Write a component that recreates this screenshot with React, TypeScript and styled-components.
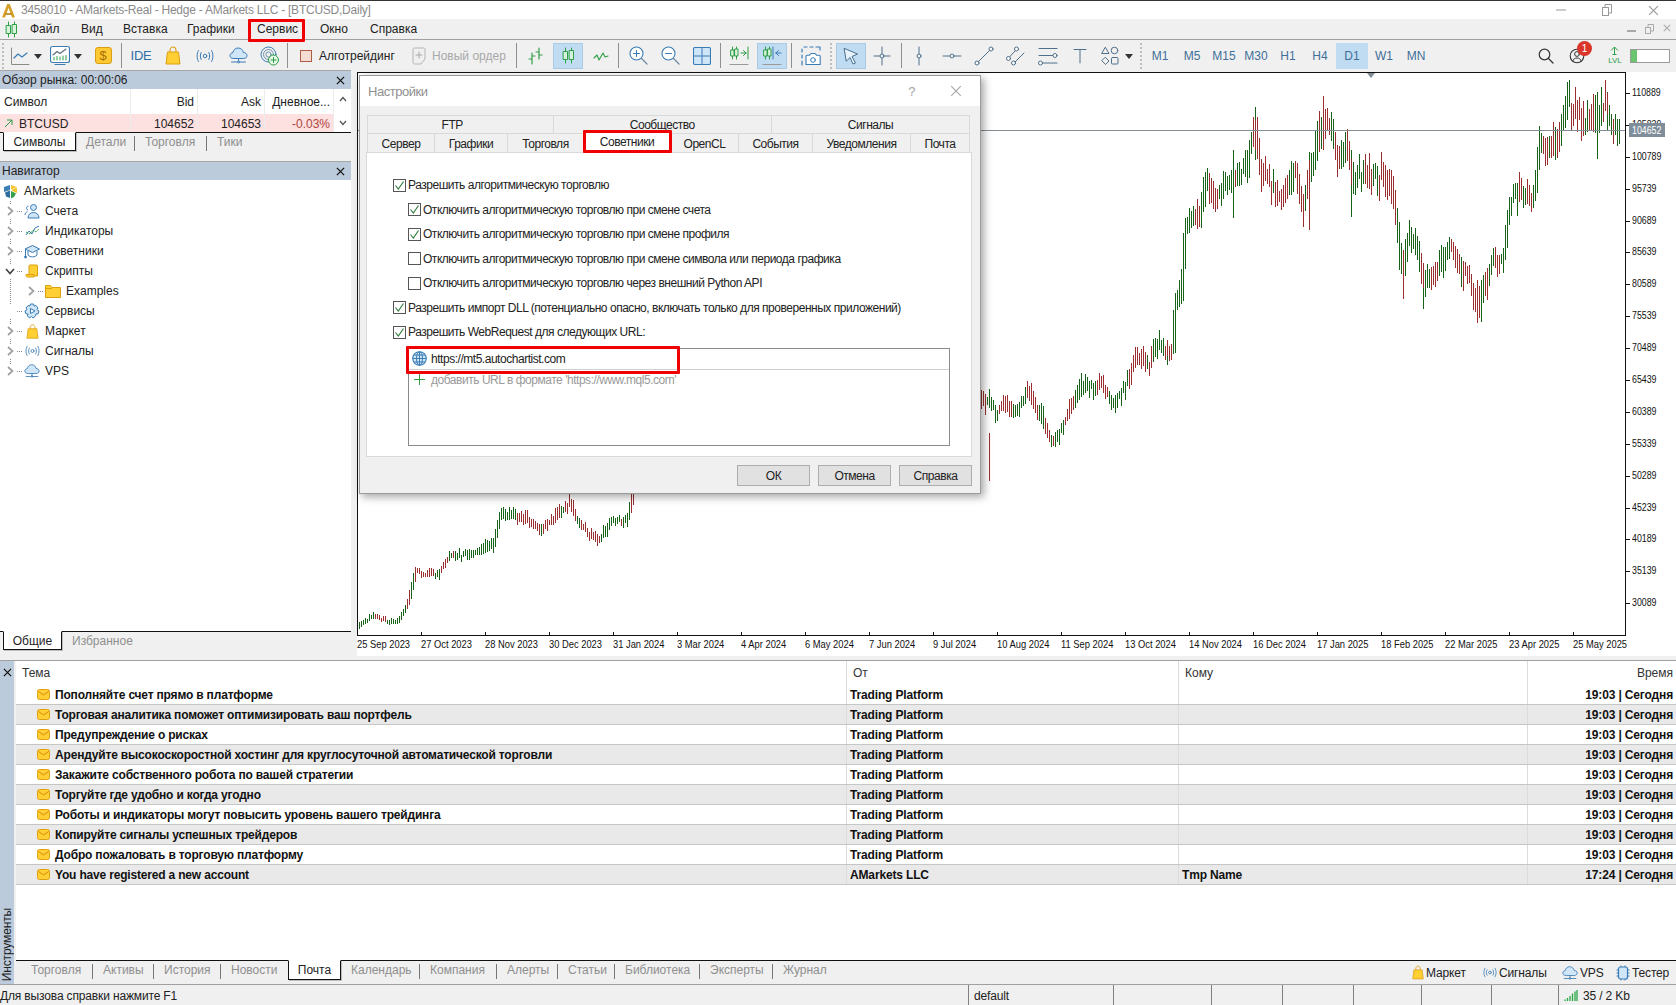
import React from 'react';
import styled, {createGlobalStyle} from 'styled-components';

const GlobalStyle = createGlobalStyle`
    html, body {
        margin: 0;
        padding: 0;
        background: #f0f0f0;
    }
    * {
        box-sizing: border-box;
    }
`

const BLUE = '#3b7cb4';
const PALE = '#cfe5f8';
const GREEN = '#2e9e47';
const GOLD = '#ffcf33';
const GOLD_DARK = '#dc9f12';

// ---------- icons ----------

const ToolSvg = ({w = 20, h = 20, children}: { w?: number, h?: number, children: React.ReactNode }) => (
    <svg width={w} height={h} viewBox={`0 0 ${w} ${h}`} fill="none" strokeLinecap="round" strokeLinejoin="round">{children}</svg>
);

const LogoA = () => (
    <svg width="15" height="15" viewBox="0 0 15 15" fill="none">
        <path d="M1 14.5 L6.2 1 H8.8 L14 14.5 H11 L7.5 5 L4 14.5 Z" fill="#d6a02a"/>
        <path d="M4.5 11 H10.5" stroke="#b97a10" strokeWidth="1.6"/>
    </svg>
);

const CandleSmall = ({color = GREEN}: { color?: string }) => (
    <ToolSvg w={13} h={17}>
        <path d="M3.5 1V16M9.5 1V16" stroke={color}/>
        <rect x="1.5" y="4.5" width="4" height="8" fill="#d7f3dc" stroke={color}/>
        <rect x="7.5" y="3.5" width="4" height="9" fill="#d7f3dc" stroke={color}/>
    </ToolSvg>
);

const LineChartIcon = () => (
    <ToolSvg w={20} h={20}>
        <path d="M1.5 2V18.5H19" stroke="#8a8a8a"/>
        <path d="M4 12L8 8L12 11L17 7" stroke={BLUE} strokeWidth="1.2"/>
    </ToolSvg>
);

const MonitorChartIcon = () => (
    <ToolSvg w={20} h={21}>
        <rect x="0.5" y="1.5" width="19" height="16" rx="2" fill="#fff" stroke={BLUE} strokeWidth="1.2"/>
        <path d="M3 10L7 6.5L10 8.5L16 4" stroke="#5b6d7a" strokeWidth="1.1"/>
        <path d="M4 15V12.5M7 15V11.5M10 15V12M13 15V11M16 15V10.5" stroke={GREEN}/>
        <path d="M5 19.5H15" stroke={BLUE} strokeWidth="1.2"/>
    </ToolSvg>
);

const BagIcon = ({w = 16, h = 19}: { w?: number, h?: number }) => (
    <svg width={w} height={h} viewBox="0 0 16 19" fill="none">
        <path d="M5 7V4.5C5 2.5 6.2 1 8 1C9.8 1 11 2.5 11 4.5V7" stroke={GOLD_DARK} strokeWidth="1.1"/>
        <path d="M2.5 6H13.5L15 18H1Z" fill={GOLD} stroke={GOLD_DARK}/>
    </svg>
);

const SignalIcon = ({w = 18, h = 14}: { w?: number, h?: number }) => (
    <svg width={w} height={h} viewBox="0 0 18 14" fill="none" stroke={BLUE} strokeLinecap="round">
        <circle cx="9" cy="7" r="1.8"/>
        <path d="M5.2 3.5C4 5.5 4 8.5 5.2 10.5M12.8 3.5C14 5.5 14 8.5 12.8 10.5"/>
        <path d="M2.5 1.5C0.6 4.5 0.6 9.5 2.5 12.5M15.5 1.5C17.4 4.5 17.4 9.5 15.5 12.5"/>
    </svg>
);

const CloudIcon = ({w = 19, h = 19}: { w?: number, h?: number }) => (
    <svg width={w} height={h} viewBox="0 0 19 19" fill="none" stroke={BLUE} strokeLinecap="round">
        <path d="M4.5 12.5C2 12.5 1 11 1 9.5C1 7.8 2.4 6.8 3.8 6.8C4.2 4 6.5 2 9.2 2C12 2 14 4 14.4 6.5C16.4 6.4 18 7.8 18 9.6C18 11.2 16.8 12.5 15 12.5Z" fill={PALE}/>
        <path d="M9.5 12.5V16M2.5 16H16.5"/>
        <circle cx="9.5" cy="16" r="1" fill="#fff"/>
    </svg>
);

const GlobePlusIcon = () => (
    <ToolSvg w={19} h={20}>
        <circle cx="8.5" cy="8.5" r="7.5" stroke={BLUE}/>
        <circle cx="8.5" cy="8.5" r="5" stroke="#6f93ad"/>
        <circle cx="8.5" cy="8.5" r="2.6" stroke="#6f93ad"/>
        <circle cx="13.5" cy="14" r="5" fill="#e6f7e8" stroke={GREEN}/>
        <path d="M13.5 11.5V16.5M11 14H16" stroke={GREEN}/>
    </ToolSvg>
);

const NewOrderIcon = () => (
    <ToolSvg w={14} h={18}>
        <path d="M1 2.5C1 1.5 1.5 1 2.5 1H11.5C12.5 1 13 1.5 13 2.5V12L9 17H2.5C1.5 17 1 16.5 1 15.5Z" fill="#efefef" stroke="#b5b5b5"/>
        <path d="M7 5V11M4 8H10" stroke="#a8a8a8"/>
    </ToolSvg>
);

const BarsIcon = () => (
    <ToolSvg w={16} h={18}>
        <path d="M5 6V17M2 12H5M5 9H8M12 1V12M9 5H12M12 8H15" stroke={GREEN} strokeWidth="1.2"/>
    </ToolSvg>
);

const ZigzagIcon = () => (
    <ToolSvg w={16} h={10}>
        <path d="M1 7L4 4L6 9L10 2L12 6L15 5" stroke={GREEN} strokeWidth="1.1"/>
    </ToolSvg>
);

const ZoomIcon = ({plus}: { plus?: boolean }) => (
    <ToolSvg w={19} h={19}>
        <circle cx="7.5" cy="7.5" r="6.5" fill="#fff" stroke={BLUE} strokeWidth="1.1"/>
        <path d="M12.5 12.5L18 18" stroke="#6a8ba6" strokeWidth="1.2"/>
        <path d="M4.5 7.5H10.5" stroke={BLUE}/>
        {plus && <path d="M7.5 4.5V10.5" stroke={BLUE}/>}
    </ToolSvg>
);

const GridIcon = () => (
    <ToolSvg w={18} h={18}>
        <rect x="0.5" y="0.5" width="17" height="17" rx="1.5" fill={PALE} stroke={BLUE} strokeWidth="1.1"/>
        <path d="M9 1V17M1 9H17" stroke={BLUE}/>
    </ToolSvg>
);

const ScrollIcon = ({back}: { back?: boolean }) => (
    <ToolSvg w={20} h={22}>
        <path d="M3.5 2V14M7.5 2V14" stroke={GREEN}/>
        <rect x="2" y="5" width="3" height="6" fill="#d7f3dc" stroke={GREEN}/>
        <rect x="6" y="4" width="3" height="7" fill="#d7f3dc" stroke={GREEN}/>
        {back
            ? <path d="M11 2V14M14 8H19M14 8L16.5 5.5M14 8L16.5 10.5" stroke={BLUE}/>
            : <path d="M12 8H17M17 8L14.5 5.5M17 8L14.5 10.5M19 2V14" stroke={GREEN}/>}
        <path d="M1 19.5H19" stroke="#9a9a9a" strokeWidth="1.2"/>
    </ToolSvg>
);

const CameraIcon = () => (
    <ToolSvg w={20} h={20}>
        <path d="M3 1H6M9 1H12M15 1H19V4M1 3V6M1 9V12M1 15V19" stroke={BLUE} strokeWidth="1.2"/>
        <path d="M5 18.5V10.5C5 9.7 5.5 9.2 6.2 9.2H8.5L10 7.5H14L15.5 9.2H18C18.7 9.2 19.2 9.7 19.2 10.5V18.5Z" fill="#fff" stroke={BLUE} strokeWidth="1.1"/>
        <circle cx="12" cy="14" r="2.3" stroke={BLUE}/>
    </ToolSvg>
);

const CursorIcon = () => (
    <ToolSvg w={16} h={18}>
        <path d="M1.5 1.5L14.5 7L9 9.5L12.5 16L10 17L7 10.5L3.5 14Z" fill="#e9f3fc" stroke="#4a6f8d"/>
    </ToolSvg>
);

const CrossIcon = () => (
    <ToolSvg w={18} h={20}>
        <path d="M9 1V7.5M9 12.5V19M1 10H6.5M11.5 10H17" stroke="#4f6f8a"/>
        <circle cx="9" cy="10" r="2" stroke="#4f6f8a"/>
    </ToolSvg>
);

const VLineIcon = () => (
    <ToolSvg w={8} h={20}>
        <path d="M4 1V7.5M4 12.5V19" stroke="#4f6f8a"/>
        <circle cx="4" cy="10" r="2" stroke="#4f6f8a"/>
    </ToolSvg>
);

const HLineIcon = () => (
    <ToolSvg w={20} h={8}>
        <path d="M1 4H7.5M12.5 4H19" stroke="#4f6f8a"/>
        <circle cx="10" cy="4" r="2" stroke="#4f6f8a"/>
    </ToolSvg>
);

const TrendIcon = () => (
    <ToolSvg w={20} h={20}>
        <path d="M4 16L16 4" stroke="#4f6f8a"/>
        <circle cx="3" cy="17" r="2" fill="#fff" stroke="#4f6f8a"/>
        <circle cx="17" cy="3" r="2" fill="#fff" stroke="#4f6f8a"/>
    </ToolSvg>
);

const ChannelIcon = () => (
    <ToolSvg w={20} h={20}>
        <path d="M3.5 11L9 5M9 16L18 7" stroke="#4f6f8a"/>
        <circle cx="2.5" cy="12.5" r="2" fill="#fff" stroke="#4f6f8a"/>
        <circle cx="10.5" cy="3" r="2" fill="#fff" stroke="#4f6f8a"/>
        <circle cx="7.5" cy="17" r="2" fill="#fff" stroke="#4f6f8a"/>
    </ToolSvg>
);

const FiboIcon = () => (
    <ToolSvg w={20} h={20}>
        <path d="M1 2.5H19M1 9.5H15M5 17H19" stroke="#4f6f8a" strokeWidth="1.1"/>
        <circle cx="17" cy="9.5" r="2" fill="#fff" stroke="#4f6f8a"/>
        <circle cx="2.5" cy="17" r="2" fill="#fff" stroke="#4f6f8a"/>
    </ToolSvg>
);

const TextToolIcon = () => (
    <ToolSvg w={14} h={16}>
        <path d="M1 1.5H13M7 1.5V15" stroke="#4f6f8a"/>
    </ToolSvg>
);

const ShapesIcon = () => (
    <ToolSvg w={18} h={20}>
        <path d="M4.5 1.5L8 7.5H1Z" stroke="#4f6f8a"/>
        <circle cx="13.5" cy="4.5" r="3.3" stroke="#4f6f8a"/>
        <path d="M4.5 11.5L8 15L4.5 18.5L1 15Z" stroke="#4f6f8a"/>
        <rect x="10.5" y="11.5" width="6.5" height="6.5" rx="1" stroke="#4f6f8a"/>
    </ToolSvg>
);

const SearchIcon = () => (
    <ToolSvg w={16} h={16}>
        <circle cx="6.5" cy="6.5" r="5.3" stroke="#333" strokeWidth="1.2"/>
        <path d="M10.5 10.5L15 15" stroke="#333" strokeWidth="1.3"/>
    </ToolSvg>
);

const ProfileIcon = () => (
    <ToolSvg w={16} h={16}>
        <circle cx="8" cy="8" r="6.8" stroke="#333" strokeWidth="1.1"/>
        <circle cx="8" cy="6" r="2.4" stroke="#333"/>
        <path d="M3.8 13C4.5 10.8 6 10 8 10C10 10 11.5 10.8 12.2 13" stroke="#333"/>
    </ToolSvg>
);

const CloseCross = ({size = 9, color = '#111', width = 1.4}: { size?: number, color?: string, width?: number }) => (
    <svg width={size} height={size} viewBox="0 0 10 10" fill="none">
        <path d="M1 1L9 9M9 1L1 9" stroke={color} strokeWidth={width}/>
    </svg>
);

const Chevron = ({open}: { open?: boolean }) => (
    <svg width="10" height="10" viewBox="0 0 10 10" fill="none">
        <path d={open ? 'M1 3L5 7.5L9 3' : 'M3 1L7.5 5L3 9'} stroke={open ? '#444' : '#a0a0a0'} strokeWidth="1.7"/>
    </svg>
);

const CubeIcon = () => (
    <svg width="15" height="15" viewBox="0 0 15 15">
        <path d="M1 3L7 1L7 6L1 8Z" fill="#3c7fb5"/>
        <path d="M8 1L14 3L8 5.5Z" fill="#f4c430"/>
        <path d="M14 3.5V9L9 7V5.5Z" fill="#f4c430"/>
        <path d="M2 8.5L7 6.5V14L3 12.5Z" fill="#2f6f9f"/>
        <path d="M8 7L13 9.5L11 13L8 14.5Z" fill="#35a04e"/>
    </svg>
);

const AccountsIcon = () => (
    <svg width="16" height="15" viewBox="0 0 16 15" fill="none" stroke={BLUE}>
        <circle cx="9.5" cy="3.5" r="3" fill={PALE}/>
        <path d="M4 14C4 10.5 6.5 8.5 9.5 8.5C12.5 8.5 15 10.5 15 14Z" fill={PALE}/>
        <path d="M4.5 2C3 2.2 2.4 3.4 2.6 4.5C2.8 5.5 3.4 6 4.2 6.2M1 11C1 9.3 2 8.2 3.5 7.8"/>
    </svg>
);

const IndicatorsIcon = () => (
    <svg width="15" height="12" viewBox="0 0 15 12" fill="none">
        <path d="M1 10L4 6L7 9L10 3L14 1" stroke={BLUE}/>
        <path d="M1 7L5 9L8 5L11 7L14 4" stroke={GREEN} strokeDasharray="2 1"/>
    </svg>
);

const GraduateIcon = () => (
    <svg width="16" height="15" viewBox="0 0 16 15" fill="none" stroke={BLUE}>
        <path d="M1 5L8.5 1.5L15.5 5L8.5 8.5Z" fill={PALE}/>
        <path d="M4 7V11C6 13.5 11 13.5 13 11V7"/>
        <path d="M1.5 5.5V12"/>
        <circle cx="1.5" cy="13" r="1" fill={BLUE}/>
    </svg>
);

const ScriptIcon = () => (
    <svg width="15" height="14" viewBox="0 0 15 14" fill="none" stroke={GOLD_DARK}>
        <path d="M4 10V2C4 1.4 4.4 1 5 1H11.5C12.2 1 12.5 1.4 12.5 2V12H3" fill={GOLD}/>
        <path d="M1 10.5H9V13H2.5C1.5 13 1 12.4 1 11.5Z" fill={GOLD}/>
    </svg>
);

const FolderIcon = () => (
    <svg width="16" height="13" viewBox="0 0 16 13">
        <path d="M0.5 0.5H5.5L7 2.5H15.5V12.5H0.5Z" fill={GOLD} stroke={GOLD_DARK}/>
        <path d="M0.5 3.5H7" stroke={GOLD_DARK} fill="none"/>
    </svg>
);

const ServiceIcon = () => (
    <svg width="16" height="16" viewBox="0 0 16 16" fill="none" stroke={BLUE}>
        <path d="M6.5 1H9.5L10 3L12 2.5L14 5L12.8 6.5L15 8L14 11L12 10.8L11.5 13L9 15L7.5 13.5L5.5 15L3.5 13L4 11L1.8 10.8L1 8L3 6.5L2 5L4 2.5L6 3Z" fill={PALE}/>
        <path d="M6.5 5.5L11 8L6.5 10.5Z" fill="#fff"/>
    </svg>
);

const GlobeIcon = () => (
    <svg width="15" height="15" viewBox="0 0 15 15" fill="none" stroke={BLUE}>
        <circle cx="7.5" cy="7.5" r="6.8" fill={PALE} strokeWidth="1.1"/>
        <ellipse cx="7.5" cy="7.5" rx="3" ry="6.8"/>
        <path d="M0.8 7.5H14.2M1.8 4H13.2M1.8 11H13.2M7.5 0.7V14.3"/>
    </svg>
);

const EnvelopeIcon = () => (
    <svg width="13" height="11" viewBox="0 0 13 11" fill="none">
        <rect x="0.5" y="0.5" width="12" height="10" rx="2" fill={GOLD} stroke="#e0a010"/>
        <path d="M1.5 2.5L6.5 6L11.5 2.5" stroke="#d8860b"/>
    </svg>
);

const ChipIcon = () => (
    <svg width="14" height="16" viewBox="0 0 14 16" fill="none" stroke={BLUE}>
        <rect x="2.5" y="2" width="9" height="12" rx="2" fill={PALE} strokeWidth="1.2"/>
        <path d="M0.5 5H2.5M0.5 8H2.5M0.5 11H2.5M11.5 5H13.5M11.5 8H13.5M11.5 11H13.5M5 0.5V2M9 0.5V2M5 14V15.5M9 14V15.5"/>
    </svg>
);

const CheckMark = () => (
    <svg width="11" height="11" viewBox="0 0 11 11" fill="none">
        <path d="M1.5 5.5L4.3 9L9.5 1.5" stroke="#2d7a3a" strokeWidth="1.1"/>
    </svg>
);

const NetBars = () => (
    <svg width="14" height="13" viewBox="0 0 14 13" fill="none" stroke="#28a745" strokeWidth="1.3">
        <path d="M1 12V10.5M3.5 12V9M6 12V7M8.5 12V4.5M11 12V2.5M13 12V1"/>
    </svg>
);

// ---------- chart data ----------

const KEYS: [number, number][] = [
    [359, 627], [372, 617], [390, 623], [399, 620], [408, 603], [415, 573], [439, 573], [448, 557], [479, 555],
    [493, 547], [500, 515], [529, 523], [551, 525], [569, 503], [578, 523], [598, 543], [609, 523], [627, 520],
    [631, 505], [636, 465], [800, 430], [980, 390], [995, 410], [1010, 412], [1028, 395], [1042, 422], [1053, 447],
    [1064, 422], [1080, 395], [1086, 390], [1098, 380], [1112, 401], [1126, 385], [1133, 363], [1149, 367], [1158, 345],
    [1166, 357], [1173, 353], [1175, 310],
    [1182, 300], [1184, 237], [1189, 217], [1200, 213], [1206, 170], [1215, 193], [1229, 180], [1233, 170], [1240, 177],
    [1251, 147], [1255, 117], [1260, 170], [1268, 183], [1282, 197], [1295, 163], [1302, 203], [1313, 170], [1322, 130],
    [1331, 127], [1337, 157], [1344, 137], [1351, 170], [1366, 183], [1384, 173], [1393, 190], [1399, 243], [1402, 283],
    [1408, 230], [1419, 260], [1424, 290], [1437, 270], [1450, 240], [1464, 267], [1477, 297], [1484, 277], [1495, 257],
    [1504, 260], [1508, 213], [1513, 197], [1524, 193], [1535, 193], [1539, 147], [1548, 137], [1557, 137], [1566, 103],
    [1575, 107], [1584, 127], [1597, 133], [1606, 100], [1612, 127], [1617, 132],
];

// forced wicks: x, top, bottom, is-up
const WICKS: [number, number, number, boolean][] = [
    [1323, 96, 150, false], [1255, 107, 160, true], [1567, 84, 120, true], [1607, 92, 130, true], [1233, 150, 218, true],
    [1309, 160, 230, false], [1351, 150, 217, true], [1403, 250, 299, false], [1423, 270, 309, true], [1477, 280, 323, false],
    [1481, 280, 322, true], [1597, 120, 159, true], [1613, 119, 144, false], [989, 433, 481, false], [1167, 345, 365, true],
];

const priceAt = (x: number) => {
    for (let i = 1; i < KEYS.length; i++) {
        if (x <= KEYS[i][0]) {
            const [x0, y0] = KEYS[i - 1];
            const [x1, y1] = KEYS[i];
            return y0 + (y1 - y0) * (x - x0) / (x1 - x0);
        }
    }
    return KEYS[KEYS.length - 1][1];
};

const buildBars = () => {
    let seed = 4211;
    const rnd = () => {
        seed = (seed * 16807) % 2147483647;
        return seed / 2147483647;
    };
    let up = '';
    let down = '';
    let wander = 0;
    let lastUp = true;
    for (let x = 359; x <= 1619; x += 2) {
        const mid = priceAt(x);
        const slope = priceAt(x + 4) - priceAt(x - 4);
        const size = 2.5 + (640 - mid) * 0.028;
        wander = wander * 0.7 + (rnd() - 0.5) * size * 1.3;
        // a steep move has to leave no gap between neighbouring bars
        const top = Math.min(mid + wander - size * (0.3 + rnd() * 0.9), priceAt(x + 2), priceAt(x - 2));
        const bottom = Math.max(mid + wander + size * (0.3 + rnd() * 0.9), priceAt(x + 2), priceAt(x - 2));
        // colours come in short runs, leaning with the direction of the price
        if (rnd() < 0.45) lastUp = rnd() < (slope < 0 ? 0.72 : 0.3);
        const seg = `M${x + 0.5} ${top.toFixed(0)}V${bottom.toFixed(0)}`;
        if (lastUp) up += seg; else down += seg;
    }
    WICKS.forEach(([x, top, bottom, isUp]) => {
        const seg = `M${x + 0.5} ${top}V${bottom}`;
        if (isUp) up += seg; else down += seg;
    });
    return {up, down};
};

const BARS = buildBars();

const PRICES = ['110889', '105839', '100789', '95739', '90689', '85639', '80589', '75539', '70489', '65439', '60389',
    '55339', '50289', '45239', '40189', '35139', '30089'];

const DATES = ['25 Sep 2023', '27 Oct 2023', '28 Nov 2023', '30 Dec 2023', '31 Jan 2024', '3 Mar 2024', '4 Apr 2024',
    '6 May 2024', '7 Jun 2024', '9 Jul 2024', '10 Aug 2024', '11 Sep 2024', '13 Oct 2024', '14 Nov 2024', '16 Dec 2024',
    '17 Jan 2025', '18 Feb 2025', '22 Mar 2025', '23 Apr 2025', '25 May 2025'];

const MAILS = [
    ['Пополняйте счет прямо в платформе', 'Trading Platform', '', '19:03 | Сегодня'],
    ['Торговая аналитика поможет оптимизировать ваш портфель', 'Trading Platform', '', '19:03 | Сегодня'],
    ['Предупреждение о рисках', 'Trading Platform', '', '19:03 | Сегодня'],
    ['Арендуйте высокоскоростной хостинг для круглосуточной автоматической торговли', 'Trading Platform', '', '19:03 | Сегодня'],
    ['Закажите собственного робота по вашей стратегии', 'Trading Platform', '', '19:03 | Сегодня'],
    ['Торгуйте где удобно и когда угодно', 'Trading Platform', '', '19:03 | Сегодня'],
    ['Роботы и индикаторы могут повысить уровень вашего трейдинга', 'Trading Platform', '', '19:03 | Сегодня'],
    ['Копируйте сигналы успешных трейдеров', 'Trading Platform', '', '19:03 | Сегодня'],
    ['Добро пожаловать в торговую платформу', 'Trading Platform', '', '19:03 | Сегодня'],
    ['You have registered a new account', 'AMarkets LLC', 'Tmp Name', '17:24 | Сегодня'],
];

// ---------- page ----------

export default function App() {
    return (
        <Page>
            <GlobalStyle/>

            <TitleBar>
                <LogoSlot><LogoA/></LogoSlot>
                <TitleText>3458010 - AMarkets-Real - Hedge - AMarkets LLC - [BTCUSD,Daily]</TitleText>
                <WinButton><svg width="10" height="10" viewBox="0 0 10 10"><path d="M0 5H10" stroke="#999"/></svg></WinButton>
                <WinButton><svg width="10" height="12" viewBox="0 0 10 12" fill="none" stroke="#999"><rect x="0.5" y="3.5" width="6" height="8"/><path d="M3 3V0.5H9.5V9H7"/></svg></WinButton>
                <WinButton><CloseCross size={11} color="#999" width={1}/></WinButton>
            </TitleBar>

            <MenuBar>
                <MenuIcon><CandleSmall/></MenuIcon>
                <MenuItem $w={51}>Файл</MenuItem>
                <MenuItem $w={42}>Вид</MenuItem>
                <MenuItem $w={64}>Вставка</MenuItem>
                <MenuItem $w={70}>Графики</MenuItem>
                <MenuItem $w={63}>Сервис<RedFrame $l={-9} $t={-3} $w={57} $h={23}/></MenuItem>
                <MenuItem $w={50}>Окно</MenuItem>
                <MenuItem $w={60}>Справка</MenuItem>
                <MdiControls>
                    <MdiButton><svg width="9" height="9" viewBox="0 0 9 9"><path d="M0 7H9" stroke="#aaa" strokeWidth="2"/></svg></MdiButton>
                    <MdiButton><svg width="9" height="10" viewBox="0 0 9 10" fill="none" stroke="#aaa"><rect x="0.5" y="3.5" width="5" height="6"/><path d="M3 3V0.5H8.5V7H6"/></svg></MdiButton>
                    <MdiButton><CloseCross size={8} color="#aaa" width={1.4}/></MdiButton>
                </MdiControls>
            </MenuBar>

            <Toolbar>
                <Grip $ml={2}/>
                <Tool $w={24} $ml={3}><LineChartIcon/></Tool>
                <Caret $w={11}/>
                <Tool $w={24} $ml={5}><MonitorChartIcon/></Tool>
                <Caret $w={12}/>
                <Tool $w={36} $ml={1}><DollarBox>$</DollarBox></Tool>
                <ToolSep/>
                <Tool $w={38}><IdeLabel>IDE</IdeLabel></Tool>
                <Tool $w={26}><BagIcon/></Tool>
                <Tool $w={38}><SignalIcon/></Tool>
                <Tool $w={28}><CloudIcon/></Tool>
                <Tool $w={35}><GlobePlusIcon/></Tool>
                <ToolSep/>
                <AlgoBox/>
                <AlgoLabel>Алготрейдинг</AlgoLabel>
                <OrderSlot><NewOrderIcon/></OrderSlot>
                <OrderLabel>Новый ордер</OrderLabel>
                <ToolSep $ml={10}/>
                <Tool $w={36}><BarsIcon/></Tool>
                <Tool $w={30} $active><CandleSmall/></Tool>
                <Tool $w={35}><ZigzagIcon/></Tool>
                <ToolSep/>
                <Tool $w={38}><ZoomIcon plus/></Tool>
                <Tool $w={26}><ZoomIcon/></Tool>
                <Tool $w={37}><GridIcon/></Tool>
                <ToolSep/>
                <Tool $w={36}><ScrollIcon/></Tool>
                <Tool $w={30} $active><ScrollIcon back/></Tool>
                <ToolSep $ml={4}/>
                <Tool $w={38}><CameraIcon/></Tool>
                <Grip/>
                <Tool $w={30} $ml={3} $active><CursorIcon/></Tool>
                <Tool $w={32}><CrossIcon/></Tool>
                <ToolSep $ml={3}/>
                <Tool $w={34}><VLineIcon/></Tool>
                <Tool $w={32}><HLineIcon/></Tool>
                <Tool $w={32}><TrendIcon/></Tool>
                <Tool $w={32}><ChannelIcon/></Tool>
                <Tool $w={32}><FiboIcon/></Tool>
                <Tool $w={32}><TextToolIcon/></Tool>
                <Tool $w={28}><ShapesIcon/></Tool>
                <Caret $w={10}/>
                <Grip $ml={6}/>
                <Periods>
                    {['M1', 'M5', 'M15', 'M30', 'H1', 'H4', 'D1', 'W1', 'MN'].map(p => (
                        <Period key={p} $active={p === 'D1'}>{p}</Period>
                    ))}
                </Periods>
                <ToolRight>
                    <Tool $w={30}><SearchIcon/></Tool>
                    <Tool $w={32}><ProfileIcon/><Badge>1</Badge></Tool>
                    <Tool $w={30} $ml={7}>
                        <LevelBox>
                            <svg width="9" height="10" viewBox="0 0 9 10" fill="none" stroke={GREEN}><path d="M4.5 9V1M1 4.5L4.5 1L8 4.5M2.5 8.5H6.5"/></svg>
                            <LevelText>LVL</LevelText>
                        </LevelBox>
                    </Tool>
                    <LevelBar><LevelFill/></LevelBar>
                </ToolRight>
            </Toolbar>

            <Main>
                <LeftPanel>
                    <PanelHeader>Обзор рынка: 00:00:06<CloseCross/></PanelHeader>
                    <WatchHead>
                        <WatchCell>Символ</WatchCell>
                        <WatchCell $right>Bid</WatchCell>
                        <WatchCell $right>Ask</WatchCell>
                        <WatchCell $right>Дневное...</WatchCell>
                        <ScrollUpCell>
                            <svg width="8" height="6" viewBox="0 0 8 6" fill="none"><path d="M1 5L4 1.5L7 5" stroke="#555" strokeWidth="1.3"/></svg>
                        </ScrollUpCell>
                    </WatchHead>
                    <WatchRow>
                        <WatchCell>
                            <svg width="9" height="9" viewBox="0 0 9 9" fill="none" stroke={GREEN}><path d="M1 8L8 1M3 1H8V6"/></svg>
                            <Symbol>BTCUSD</Symbol>
                        </WatchCell>
                        <WatchCell $right>104652</WatchCell>
                        <WatchCell $right>104653</WatchCell>
                        <WatchCell $right $red>-0.03%</WatchCell>
                        <ScrollCell>
                            <svg width="8" height="6" viewBox="0 0 8 6" fill="none"><path d="M1 1L4 4.5L7 1" stroke="#555" strokeWidth="1.3"/></svg>
                        </ScrollCell>
                    </WatchRow>
                    <UpperTabs>
                        <ActiveSideTab $w={73}>Символы</ActiveSideTab>
                        <SideTab $w={59}>Детали</SideTab>
                        <SideTab $w={72}>Торговля</SideTab>
                        <SideTab $last>Тики</SideTab>
                    </UpperTabs>
                    <PanelHeader>Навигатор<CloseCross/></PanelHeader>
                    <Tree>
                        <TreeLine/>
                        <TreeRoot><CubeIcon/><TreeRootText>AMarkets</TreeRootText></TreeRoot>
                        <TreeItem icon={<AccountsIcon/>} label="Счета"/>
                        <TreeItem icon={<IndicatorsIcon/>} label="Индикаторы"/>
                        <TreeItem icon={<GraduateIcon/>} label="Советники"/>
                        <TreeItem icon={<ScriptIcon/>} label="Скрипты" open/>
                        <TreeItem icon={<FolderIcon/>} label="Examples" indent={21}/>
                        <TreeItem icon={<ServiceIcon/>} label="Сервисы" leaf/>
                        <TreeItem icon={<BagIcon w={13} h={15}/>} label="Маркет"/>
                        <TreeItem icon={<SignalIcon w={15} h={12}/>} label="Сигналы"/>
                        <TreeItem icon={<CloudIcon w={16} h={16}/>} label="VPS"/>
                    </Tree>
                    <LowerTabs>
                        <ActiveLowerTab>Общие</ActiveLowerTab>
                        <SideTab $last>Избранное</SideTab>
                    </LowerTabs>
                </LeftPanel>

                <ChartPanel>
                    <PlotRow>
                        <Plot>
                            <svg width="1267" height="562" viewBox="358 73 1267 562" shapeRendering="crispEdges">
                                <path d={BARS.up} stroke="#176317" fill="none"/>
                                <path d={BARS.down} stroke="#9b2f2f" fill="none"/>
                                <path d="M358 130H1625" stroke="#858d94"/>
                                <path d="M1367 73H1375L1371 78Z" fill="#7f8c98" shapeRendering="auto"/>
                            </svg>
                        </Plot>
                        <PriceAxis>
                            {PRICES.map(p => <PriceLabel key={p}><PriceText>{p}</PriceText></PriceLabel>)}
                            <PriceTag><PriceText>104652</PriceText></PriceTag>
                        </PriceAxis>
                    </PlotRow>
                    <TimeAxis>
                        {DATES.map(d => <TimeLabel key={d}><TimeText>{d}</TimeText></TimeLabel>)}
                    </TimeAxis>
                </ChartPanel>

                <Dialog>
                    <DialogTitle>
                        <DialogCaption>Настройки</DialogCaption>
                        <HelpMark>?</HelpMark>
                        <CloseCross size={12} color="#a5a5a5" width={0.9}/>
                    </DialogTitle>
                    <TabRowTop>
                        <FtpTab>FTP</FtpTab>
                        <DialogTab>Сообщество</DialogTab>
                        <DialogTab>Сигналы</DialogTab>
                    </TabRowTop>
                    <TabRowBottom>
                        <LowTab>Сервер</LowTab>
                        <LowTab>Графики</LowTab>
                        <LowTab>Торговля</LowTab>
                        <DialogTab $active>Советники<RedFrame $l={-1} $t={-1} $w={89} $h={23}/></DialogTab>
                        <LowTab>OpenCL</LowTab>
                        <LowTab>События</LowTab>
                        <LowTab>Уведомления</LowTab>
                        <LowTab>Почта</LowTab>
                    </TabRowBottom>
                    <DialogPanel>
                        <OptionList>
                            <Option checked label="Разрешить алгоритмическую торговлю"/>
                            <Option checked nested label="Отключить алгоритмическую торговлю при смене счета"/>
                            <Option checked nested label="Отключить алгоритмическую торговлю при смене профиля"/>
                            <Option nested label="Отключить алгоритмическую торговлю при смене символа или периода графика"/>
                            <Option nested label="Отключить алгоритмическую торговлю через внешний Python API"/>
                            <Option checked label="Разрешить импорт DLL (потенциально опасно, включать только для проверенных приложений)"/>
                            <Option checked label="Разрешить WebRequest для следующих URL:"/>
                        </OptionList>
                        <UrlBox>
                            <UrlRow>
                                <GlobeIcon/>
                                <UrlText>https://mt5.autochartist.com</UrlText>
                                <RedFrame $l={-3} $t={-3} $w={274} $h={28}/>
                            </UrlRow>
                            <UrlAddRow>
                                <svg width="13" height="13" viewBox="0 0 13 13"><path d="M6.5 1V12M1 6.5H12" stroke={GREEN}/></svg>
                                <UrlHint>добавить URL в формате 'https://www.mql5.com'</UrlHint>
                            </UrlAddRow>
                        </UrlBox>
                    </DialogPanel>
                    <DialogFooter>
                        <DialogButton>ОК</DialogButton>
                        <DialogButton>Отмена</DialogButton>
                        <DialogButton>Справка</DialogButton>
                    </DialogFooter>
                </Dialog>
            </Main>

            <BottomPanel>
                <SideStrip>
                    <CloseCross size={9}/>
                    <SideCaption>Инструменты</SideCaption>
                </SideStrip>
                <BottomContent>
                    <MailHead>
                        <MailCell>Тема</MailCell>
                        <MailCell $line>От</MailCell>
                        <MailCell $line>Кому</MailCell>
                        <MailCell $line $right>Время</MailCell>
                    </MailHead>
                    <MailBody>
                        {MAILS.map((m, i) => (
                            <MailRow key={m[0]} $alt={i % 2 === 1}>
                                <MailSubject><EnvelopeIcon/><span>{m[0]}</span></MailSubject>
                                <MailCell $line $bold>{m[1]}</MailCell>
                                <MailCell $line $bold>{m[2]}</MailCell>
                                <MailCell $line $bold $right>{m[3]}</MailCell>
                            </MailRow>
                        ))}
                    </MailBody>
                    <BottomTabs>
                        <BottomTab $w={72}>Торговля</BottomTab>
                        <BottomTab $w={61}>Активы</BottomTab>
                        <BottomTab $w={67}>История</BottomTab>
                        <BottomTab $w={67} $plain>Новости</BottomTab>
                        <ActiveBottomTab>Почта</ActiveBottomTab>
                        <BottomTab $w={79}>Календарь</BottomTab>
                        <BottomTab $w={77}>Компания</BottomTab>
                        <BottomTab $w={61}>Алерты</BottomTab>
                        <BottomTab $w={57}>Статьи</BottomTab>
                        <BottomTab $w={85}>Библиотека</BottomTab>
                        <BottomTab $w={73}>Эксперты</BottomTab>
                        <BottomTab $w={69} $plain>Журнал</BottomTab>
                        <QuickLinks>
                            <QuickLink $w={71}><BagIcon w={12} h={15}/>Маркет</QuickLink>
                            <QuickLink $w={79}><SignalIcon w={14} h={11}/>Сигналы</QuickLink>
                            <QuickLink $w={54}><CloudIcon w={16} h={16}/>VPS</QuickLink>
                            <QuickLink $w={64}><ChipIcon/>Тестер</QuickLink>
                        </QuickLinks>
                    </BottomTabs>
                </BottomContent>
            </BottomPanel>

            <StatusBar>
                <StatusCell $w={968}>Для вызова справки нажмите F1</StatusCell>
                <StatusCell $w={145} $line>default</StatusCell>
                <StatusCell $w={98} $line/>
                <StatusCell $w={71} $line/>
                <StatusCell $w={71} $line/>
                <StatusCell $w={68} $line/>
                <StatusCell $w={70} $line/>
                <StatusCell $w={67} $line/>
                <StatusCell $w={118} $line><NetBars/>35 / 2 Kb</StatusCell>
            </StatusBar>
        </Page>
    );
}

const TreeItem = ({icon, label, open, leaf, indent = 0}: {
    icon: React.ReactNode, label: string, open?: boolean, leaf?: boolean, indent?: number
}) => (
    <TreeRow $indent={indent}>
        <TreeToggle>{!leaf && <Chevron open={open}/>}</TreeToggle>
        <TreeDots/>
        <TreeIcon>{icon}</TreeIcon>
        <TreeLabel>{label}</TreeLabel>
    </TreeRow>
);

const Option = ({label, checked, nested}: { label: string, checked?: boolean, nested?: boolean }) => (
    <OptionRow $nested={nested}>
        <CheckBox>{checked && <CheckMark/>}</CheckBox>
        {label}
    </OptionRow>
);

const Page = styled.div`
    position: relative;
    width: 1676px;
    height: 1005px;
    overflow: hidden;
    background: #f0f0f0;
    font-family: "Liberation Sans", Arial, sans-serif;
    font-size: 12px;
    color: #222;
`

const TitleBar = styled.div`
    height: 19px;
    display: flex;
    align-items: center;
    background: #fff;
    border-top: 1px solid #333;
`

const LogoSlot = styled.div`
    width: 21px;
    padding-left: 1px;
    display: flex;
`

const TitleText = styled.div`
    flex: 1;
    color: #8b8b8b;
    font-size: 12px;
    letter-spacing: -0.24px;
`

const WinButton = styled.div`
    width: 46px;
    display: flex;
    justify-content: center;
`

const RedFrame = styled.div<{ $l: number, $t: number, $w: number, $h: number }>`
    position: absolute;
    left: ${p => p.$l}px;
    top: ${p => p.$t}px;
    width: ${p => p.$w}px;
    height: ${p => p.$h}px;
    border: 3px solid #f00000;
    border-radius: 1px;
`

const MenuBar = styled.div`
    height: 21px;
    display: flex;
    align-items: center;
    background: #f0f0f0;
    border-bottom: 1px solid #a0a0a0;
`

const MenuIcon = styled.div`
    width: 30px;
    padding-left: 5px;
    display: flex;
`

const MenuItem = styled.div<{ $w: number }>`
    position: relative;
    width: ${p => p.$w}px;
`

const MdiControls = styled.div`
    margin-left: auto;
    display: flex;
`

const MdiButton = styled.div`
    width: 18px;
    display: flex;
    justify-content: center;
`

const Toolbar = styled.div`
    height: 30px;
    padding-top: 1px;
    display: flex;
    align-items: center;
    background: #f0f0f0;
`

const Grip = styled.div<{ $ml?: number }>`
    width: 3px;
    height: 26px;
    margin-left: ${p => p.$ml || 0}px;
    border-left: 2px dotted #bdbdbd;
`

const Tool = styled.div<{ $w: number, $ml?: number, $active?: boolean }>`
    position: relative;
    flex: none;
    width: ${p => p.$w}px;
    height: 26px;
    margin-left: ${p => p.$ml || 0}px;
    display: flex;
    align-items: center;
    justify-content: center;
    background: ${p => p.$active ? '#bfdcf2' : 'transparent'};
    outline: ${p => p.$active ? '1px solid #a9cbe6' : 'none'};
    outline-offset: -1px;
`

const Caret = styled.div<{ $w: number }>`
    position: relative;
    flex: none;
    width: ${p => p.$w}px;
    height: 26px;
    &::after {
        content: "";
        position: absolute;
        left: 50%;
        top: 11px;
        margin-left: -4px;
        border: 4px solid transparent;
        border-top: 5px solid #333;
        border-bottom: 0;
    }
`

const ToolSep = styled.div<{ $ml?: number }>`
    flex: none;
    width: 1px;
    height: 25px;
    margin-left: ${p => p.$ml || 0}px;
    background: #8f8f8f;
`

const DollarBox = styled.div`
    width: 17px;
    height: 17px;
    border: 1px solid #d99e12;
    border-radius: 3px;
    background: #ffc933;
    color: #a86f05;
    font-size: 13px;
    line-height: 15px;
    text-align: center;
`

const IdeLabel = styled.div`
    color: #2f6da5;
    font-size: 13px;
    letter-spacing: -0.3px;
`

const AlgoBox = styled.div`
    flex: none;
    width: 12px;
    height: 12px;
    margin-left: 12px;
    border: 1px solid #b05a44;
    background: #f5dcd3;
`

const AlgoLabel = styled.div`
    flex: none;
    width: 78px;
    margin-left: 7px;
    white-space: nowrap;
`

const OrderSlot = styled.div`
    flex: none;
    width: 14px;
    margin-left: 15px;
    display: flex;
`

const OrderLabel = styled.div`
    flex: none;
    width: 74px;
    margin-left: 6px;
    color: #a8a8a8;
    white-space: nowrap;
`

const Periods = styled.div`
    margin-left: 1px;
    display: flex;
`

const Period = styled.div<{ $active?: boolean }>`
    width: 32px;
    height: 26px;
    line-height: 26px;
    text-align: center;
    color: #3f6f99;
    background: ${p => p.$active ? '#bfdcf2' : 'transparent'};
`

const ToolRight = styled.div`
    margin-left: auto;
    margin-right: 6px;
    display: flex;
    align-items: center;
`

const Badge = styled.div`
    position: absolute;
    left: 16px;
    top: -2px;
    width: 15px;
    height: 15px;
    border-radius: 50%;
    background: #d9352b;
    color: #fff;
    font-size: 10px;
    line-height: 15px;
    text-align: center;
`

const LevelBox = styled.div`
    display: flex;
    flex-direction: column;
    align-items: center;
    line-height: 9px;
`

const LevelText = styled.div`
    color: ${GREEN};
    font-size: 8px;
`

const LevelBar = styled.div`
    width: 40px;
    height: 14px;
    border: 1px solid #9a9a9a;
    background: #fff;
`

const LevelFill = styled.div`
    width: 6px;
    height: 100%;
    background: #69c46d;
`

const Main = styled.div`
    position: relative;
    height: 590px;
    display: flex;
`

const LeftPanel = styled.div`
    width: 351px;
    display: flex;
    flex-direction: column;
`

const PanelHeader = styled.div`
    flex: none;
    height: 19px;
    padding: 0 6px 0 2px;
    display: flex;
    align-items: center;
    justify-content: space-between;
    background: #bccbdb;
    border-top: 1px solid #a6a6a6;
`

const watchGrid = `
    display: grid;
    grid-template-columns: 131px 67px 67px 69px 17px;
    align-items: stretch;
`

const WatchHead = styled.div`
    ${watchGrid};
    height: 25px;
    background: #fff;
`

const WatchRow = styled.div`
    ${watchGrid};
    height: 18px;
    background: #fde0e0;
`

const WatchCell = styled.div<{ $right?: boolean, $red?: boolean }>`
    padding: 1px 3px 0 4px;
    display: flex;
    align-items: center;
    justify-content: ${p => p.$right ? 'flex-end' : 'flex-start'};
    border-right: 1px solid #ececec;
    color: ${p => p.$red ? '#b0473d' : '#222'};
    white-space: nowrap;
`

const Symbol = styled.span`
    margin-left: 6px;
`

const ScrollCell = styled.div`
    display: flex;
    align-items: center;
    justify-content: center;
    background: #fff;
`

const ScrollUpCell = styled(ScrollCell)`
    padding-bottom: 6px;
`

const UpperTabs = styled.div`
    flex: none;
    height: 29px;
    padding-left: 3px;
    display: flex;
    align-items: flex-start;
    border-top: 1px solid #111;
    background: #f0f0f0;
`

const SideTab = styled.div<{ $w?: number, $last?: boolean }>`
    width: ${p => p.$w ? `${p.$w}px` : 'auto'};
    height: 15px;
    margin-top: 3px;
    padding-left: 10px;
    line-height: 13px;
    color: #8f8f8f;
    border-right: ${p => p.$last ? '0' : '1px solid #777'};
    white-space: nowrap;
`

const ActiveSideTab = styled.div<{ $w: number }>`
    width: ${p => p.$w}px;
    height: 19px;
    margin-top: -1px;
    line-height: 18px;
    text-align: center;
    background: #fff;
    border: 1px solid #111;
    border-top-color: #fff;
    box-shadow: 1px 1px 0 #bdbdbd;
`

const Tree = styled.div`
    position: relative;
    flex: 1;
    padding-top: 1px;
    background: #fff;
`

const TreeLine = styled.div`
    position: absolute;
    left: 10px;
    top: 21px;
    height: 171px;
    border-left: 1px dotted #888;
`

const TreeRoot = styled.div`
    position: relative;
    height: 20px;
    padding-left: 3px;
    display: flex;
    align-items: center;
`

const TreeRootText = styled.span`
    margin-left: 6px;
`

const TreeRow = styled.div<{ $indent: number }>`
    position: relative;
    height: 20px;
    padding-left: ${p => 3 + p.$indent}px;
    display: flex;
    align-items: center;
`

const TreeToggle = styled.div`
    width: 14px;
    height: 14px;
    display: flex;
    align-items: center;
    justify-content: center;
    background: #fff;
`

const TreeDots = styled.div`
    width: 5px;
    margin-right: 2px;
    border-top: 1px dotted #888;
`

const TreeIcon = styled.div`
    width: 16px;
    display: flex;
    justify-content: center;
`

const TreeLabel = styled.span`
    margin-left: 5px;
`

const LowerTabs = styled.div`
    flex: none;
    height: 29px;
    padding-left: 3px;
    display: flex;
    align-items: flex-start;
    border-top: 1px solid #111;
    background: #f0f0f0;
`

const ActiveLowerTab = styled(ActiveSideTab).attrs({$w: 59})``

const ChartPanel = styled.div`
    flex: 1;
    margin: 2px 0 4px 6px;
    display: flex;
    flex-direction: column;
    background: #fff;
`

const PlotRow = styled.div`
    flex: none;
    height: 564px;
    display: flex;
`

const Plot = styled.div`
    width: 1269px;
    border: 1px solid #111;
    & > svg {
        display: block;
    }
`

const PriceAxis = styled.div`
    position: relative;
    flex: 1;
    padding-top: 5px;
`

const PriceLabel = styled.div`
    position: relative;
    height: 31.9px;
    line-height: 31.9px;
    padding-left: 6px;
    font-size: 11px;
    color: #111;
    &::before {
        content: "";
        position: absolute;
        left: 0;
        top: 50%;
        width: 4px;
        border-top: 1px solid #111;
    }
`

// the axis digits in the terminal are tall and narrow
const PriceText = styled.span`
    display: inline-block;
    transform: scaleX(0.8);
    transform-origin: left center;
`

const PriceTag = styled.div`
    position: absolute;
    left: 3px;
    top: 51px;
    width: 36px;
    height: 14px;
    padding-left: 3px;
    line-height: 14px;
    background: #808e9b;
    color: #fff;
    font-size: 11px;
`

const TimeAxis = styled.div`
    flex: 1;
    display: flex;
    background: #fff;
`

const TimeLabel = styled.div`
    position: relative;
    flex: none;
    width: 64px;
    padding-top: 2px;
    font-size: 11px;
    color: #111;
    white-space: nowrap;
    &::before {
        content: "";
        position: absolute;
        left: 0;
        top: -4px;
        height: 4px;
        border-left: 1px solid #111;
    }
`

const TimeText = styled.span`
    display: inline-block;
    transform: scaleX(0.85);
    transform-origin: left center;
`

const Dialog = styled.div`
    position: absolute;
    left: 359px;
    top: 5px;
    width: 622px;
    height: 419px;
    display: flex;
    flex-direction: column;
    background: #f0f0f0;
    border: 1px solid #9a9a9a;
    box-shadow: 3px 3px 8px rgba(0, 0, 0, 0.35);
    letter-spacing: -0.47px;
`

const DialogTitle = styled.div`
    flex: none;
    height: 30px;
    padding-right: 18px;
    display: flex;
    align-items: center;
    background: #fff;
`

const DialogCaption = styled.div`
    flex: 1;
    padding-left: 8px;
    color: #8f8f8f;
    font-size: 13px;
`

const HelpMark = styled.div`
    margin-right: 35px;
    color: #a5a5a5;
    font-size: 13px;
`

const tabRow = `
    flex: none;
    display: grid;
    width: 602px;
    margin-left: 8px;
`

const TabRowTop = styled.div`
    ${tabRow};
    height: 18px;
    margin-top: 9px;
    grid-template-columns: 185.5px 218.5px 198px;
`

const TabRowBottom = styled.div`
    ${tabRow};
    height: 19px;
    grid-template-columns: 67px 73px 76px 87px 68px 74px 98px 59px;
`

const DialogTab = styled.div<{ $active?: boolean }>`
    position: relative;
    display: flex;
    align-items: center;
    justify-content: center;
    border-top: 1px solid #d9d9d9;
    border-right: 1px solid #d9d9d9;
    border-left: 1px solid #d9d9d9;
    margin-left: -1px;
    z-index: ${p => p.$active ? 1 : 0};
    background: ${p => p.$active ? '#fff' : '#f0f0f0'};
    top: ${p => p.$active ? '-3px' : '0'};
    height: ${p => p.$active ? '22px' : 'auto'};
`

const FtpTab = styled(DialogTab)`
    padding-right: 16px;
`

const LowTab = styled(DialogTab)`
    padding-bottom: 2px;
`

const DialogPanel = styled.div`
    flex: none;
    position: relative;
    width: 606px;
    height: 305px;
    margin-left: 6px;
    padding: 20px 0 0 26px;
    background: #fff;
    border: 1px solid #d9d9d9;
`

const OptionList = styled.div`
    display: flex;
    flex-direction: column;
`

const OptionRow = styled.div<{ $nested?: boolean }>`
    height: 24.5px;
    margin-left: ${p => p.$nested ? 15 : 0}px;
    display: flex;
    align-items: center;
    white-space: nowrap;
`

const CheckBox = styled.div`
    width: 13px;
    height: 13px;
    margin-right: 2px;
    display: flex;
    align-items: center;
    justify-content: center;
    background: #fff;
    border: 1px solid #555;
`

const UrlBox = styled.div`
    width: 542px;
    height: 98px;
    margin: 3px 0 0 15px;
    border: 1px solid #8a8a8a;
`

const UrlRow = styled.div`
    position: relative;
    height: 21px;
    padding-left: 3px;
    display: flex;
    align-items: center;
    border-bottom: 1px solid #cfcfcf;
`

const UrlText = styled.span`
    margin-left: 4px;
`

const UrlAddRow = styled.div`
    height: 20px;
    padding-left: 4px;
    display: flex;
    align-items: center;
`

const UrlHint = styled.span`
    margin-left: 5px;
    color: #9a9a9a;
`

const DialogFooter = styled.div`
    flex: none;
    margin-top: 8px;
    padding-right: 8px;
    display: flex;
    justify-content: flex-end;
    gap: 8px;
`

const DialogButton = styled.div`
    width: 73px;
    height: 21px;
    line-height: 20px;
    text-align: center;
    background: #e1e1e1;
    border: 1px solid #adadad;
`

const BottomPanel = styled.div`
    height: 324px;
    display: flex;
    border-top: 1px solid #a0a0a0;
`

const SideStrip = styled.div`
    flex: none;
    width: 14px;
    padding: 7px 0 3px;
    display: flex;
    flex-direction: column;
    align-items: center;
    justify-content: space-between;
    background: #bccbdb;
`

const SideCaption = styled.div`
    writing-mode: vertical-rl;
    transform: rotate(180deg);
    font-size: 12px;
    line-height: 13px;
    letter-spacing: -0.15px;
`

const BottomContent = styled.div`
    flex: 1;
    margin-left: 2px;
    display: flex;
    flex-direction: column;
    background: #fff;
`

const mailGrid = `
    display: grid;
    grid-template-columns: 830px 332px 349px 149px;
`

const MailHead = styled.div`
    ${mailGrid};
    flex: none;
    height: 24px;
`

const MailBody = styled.div`
    flex: 1;
`

const MailRow = styled.div<{ $alt: boolean }>`
    ${mailGrid};
    height: 20px;
    background: ${p => p.$alt ? '#e9e9e9' : '#fff'};
    border-bottom: 1px solid #c6c6c6;
`

const MailCell = styled.div<{ $line?: boolean, $right?: boolean, $bold?: boolean }>`
    display: flex;
    align-items: center;
    justify-content: ${p => p.$right ? 'flex-end' : 'flex-start'};
    padding: ${p => p.$right ? '0 3px 0 0' : p.$bold ? '0 0 0 3px' : '0 0 0 6px'};
    border-left: ${p => p.$line ? '1px solid #dcdcdc' : '0'};
    font-weight: ${p => p.$bold ? 700 : 400};
    letter-spacing: ${p => p.$bold ? '-0.15px' : '0'};
    color: ${p => p.$bold ? '#111' : '#333'};
    white-space: nowrap;
`

const MailSubject = styled.div`
    padding-left: 21px;
    display: flex;
    align-items: center;
    gap: 5px;
    font-weight: 700;
    letter-spacing: -0.18px;
    color: #111;
    white-space: nowrap;
`

const BottomTabs = styled.div`
    flex: none;
    height: 24px;
    padding-left: 5px;
    display: flex;
    align-items: flex-start;
    background: #f0f0f0;
    border-top: 1px solid #111;
`

const BottomTab = styled.div<{ $w: number, $plain?: boolean }>`
    width: ${p => p.$w}px;
    height: 15px;
    margin-top: 3px;
    padding-left: 10px;
    line-height: 12px;
    color: #8f8f8f;
    border-right: ${p => p.$plain ? '0' : '1px solid #777'};
    white-space: nowrap;
`

const ActiveBottomTab = styled.div`
    width: 53px;
    height: 20px;
    margin-top: -1px;
    line-height: 19px;
    text-align: center;
    background: #fff;
    border: 1px solid #111;
    border-top-color: #fff;
    box-shadow: 1px 1px 0 #bdbdbd;
`

const QuickLinks = styled.div`
    margin-left: auto;
    height: 100%;
    display: flex;
`

const QuickLink = styled.div<{ $w: number }>`
    width: ${p => p.$w}px;
    height: 100%;
    padding-left: 4px;
    display: flex;
    align-items: center;
    gap: 2px;
    letter-spacing: -0.15px;
    white-space: nowrap;
`

const StatusBar = styled.div`
    height: 21px;
    display: flex;
    background: #f0f0f0;
    border-top: 1px solid #a0a0a0;
`

const StatusCell = styled.div<{ $w: number, $line?: boolean }>`
    flex: none;
    width: ${p => p.$w}px;
    padding: 1px 0 0 ${p => p.$line ? 5 : 0}px;
    display: flex;
    align-items: center;
    gap: 5px;
    border-left: ${p => p.$line ? '1px solid #808080' : '0'};
    letter-spacing: -0.15px;
    white-space: nowrap;
`
